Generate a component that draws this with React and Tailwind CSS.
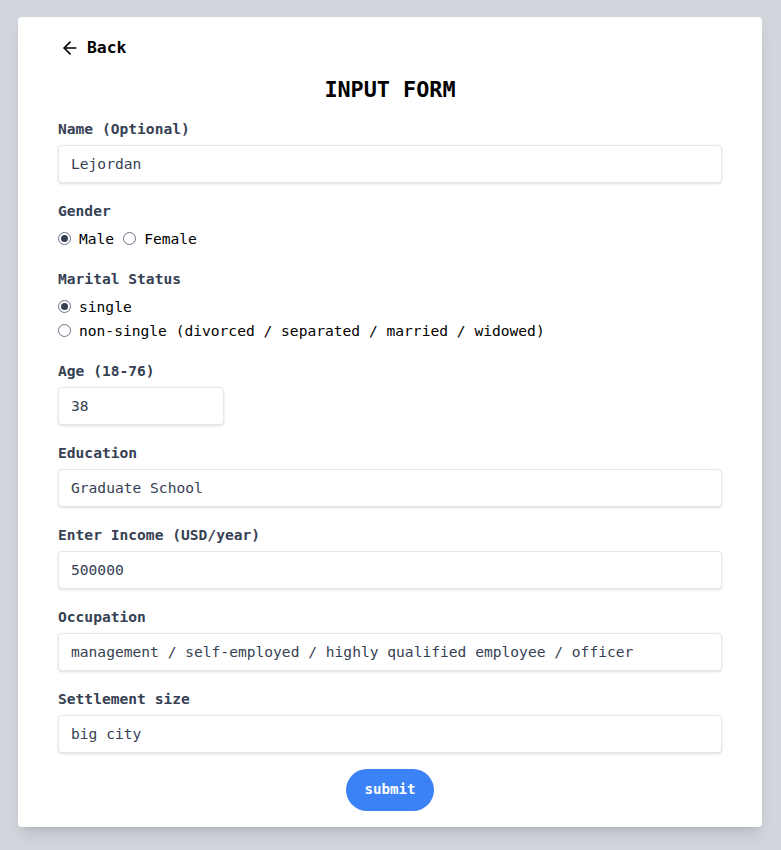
import React from 'react';
import { ArrowLeft } from 'lucide-react';

const mono = { fontFamily: '"DejaVu Sans Mono", "Liberation Mono", monospace' };

const Field = ({ label, value, narrow }) => (
  <div className="mb-4">
    <label className="block h-6 leading-6 text-[14.6px] font-bold text-gray-700 mb-1">{label}</label>
    <div
      className={`${narrow ? 'w-[166px]' : 'w-full'} h-[38px] flex items-center px-3 border border-gray-200 rounded shadow-sm text-[14.6px] text-gray-700 bg-white`}
    >
      {value}
    </div>
  </div>
);

const Radio = ({ checked, label }) => (
  <span className="inline-flex items-center">
    <span className="w-[13px] h-[13px] rounded-full border border-gray-500 flex items-center justify-center mr-[8px]">
      {checked && <span className="w-[7px] h-[7px] rounded-full bg-gray-700" />}
    </span>
    <span className="text-[14.6px] text-black">{label}</span>
  </span>
);

const App = () => {
  return (
    <div className="min-h-screen bg-gray-300 pt-[17px] pb-[23px]" style={mono}>
      <div className="w-[744px] ml-[18px] bg-white rounded shadow-lg px-10 pt-4 pb-4">
        {/* Back link */}
        <div className="h-7 flex items-center pl-[2px] pt-[2px]">
          <ArrowLeft className="w-5 h-5 text-black mr-[7px]" strokeWidth={2} />
          <span className="text-[16.4px] font-bold text-black">Back</span>
        </div>

        <h1 className="mt-[13px] h-8 leading-8 text-center text-[21.8px] font-bold text-black">INPUT FORM</h1>

        <div className="mt-[11px]">
          <Field label="Name (Optional)" value="Lejordan" />

          {/* Gender */}
          <div className="mb-[16px]">
            <div className="h-6 leading-6 text-[14.6px] font-bold text-gray-700 mb-[4px]">Gender</div>
            <div className="h-6 flex items-center gap-[9px]">
              <Radio checked label="Male" />
              <Radio label="Female" />
            </div>
          </div>

          {/* Marital status */}
          <div className="mb-[16px]">
            <div className="h-6 leading-6 text-[14.6px] font-bold text-gray-700 mb-[4px]">Marital Status</div>
            <div className="h-6 flex items-center">
              <Radio checked label="single" />
            </div>
            <div className="h-6 flex items-center">
              <Radio label="non-single (divorced / separated / married / widowed)" />
            </div>
          </div>

          <Field label="Age (18-76)" value="38" narrow />
          <Field label="Education" value="Graduate School" />
          <Field label="Enter Income (USD/year)" value="500000" />
          <Field label="Occupation" value="management / self-employed / highly qualified employee / officer" />
          <Field label="Settlement size" value="big city" />
        </div>

        <div className="flex justify-center">
          <button className="h-[42px] px-[18px] rounded-full bg-[#3b82f6] text-white text-[14.2px] font-bold">
            submit
          </button>
        </div>
      </div>
    </div>
  );
};

export default App;
